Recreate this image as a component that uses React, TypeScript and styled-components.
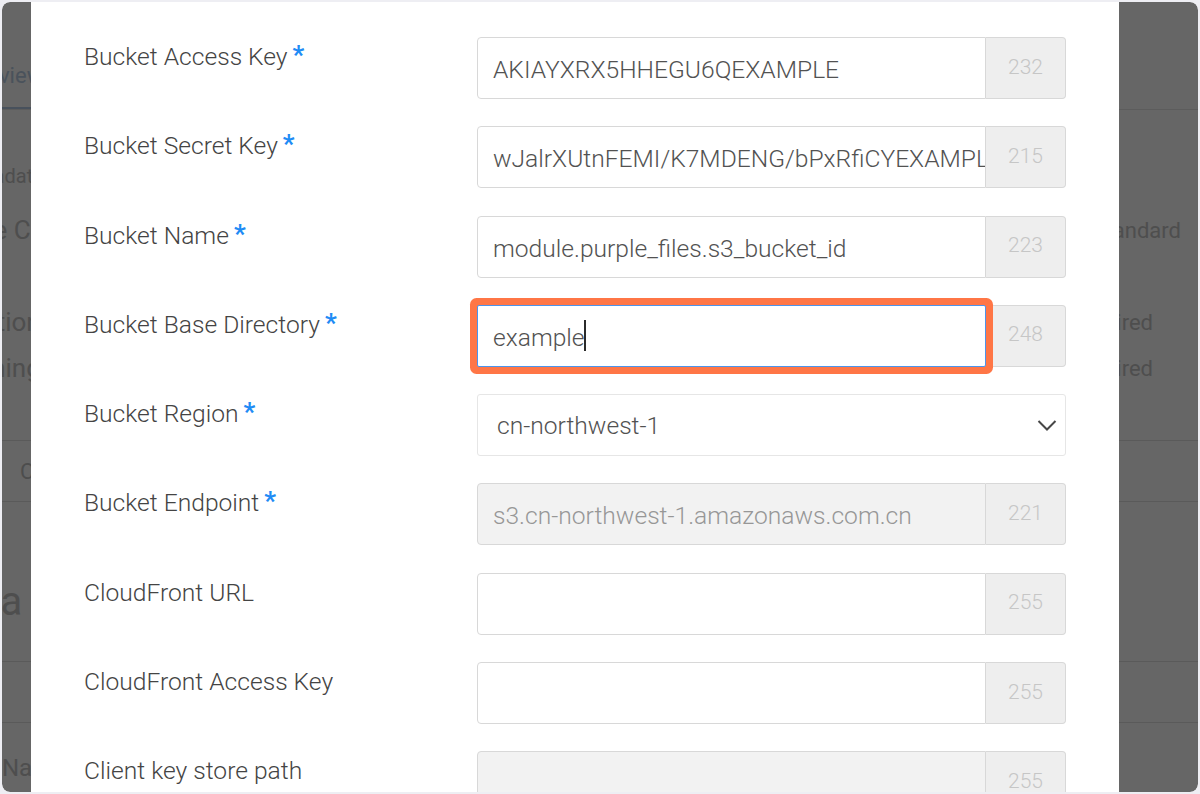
import React from "react";
import styled, { createGlobalStyle } from "styled-components";

interface Field {
  label: string;
  required?: boolean;
  value?: string;
  count?: number;
  focused?: boolean;
  disabled?: boolean;
  select?: boolean;
}

const fields: Field[] = [
  { label: "Bucket Access Key", required: true, value: "AKIAYXRX5HHEGU6QEXAMPLE", count: 232 },
  { label: "Bucket Secret Key", required: true, value: "wJalrXUtnFEMI/K7MDENG/bPxRfiCYEXAMPLEKEY", count: 215 },
  { label: "Bucket Name", required: true, value: "module.purple_files.s3_bucket_id", count: 223 },
  { label: "Bucket Base Directory", required: true, value: "example", count: 248, focused: true },
  { label: "Bucket Region", required: true, value: "cn-northwest-1", select: true },
  { label: "Bucket Endpoint", required: true, value: "s3.cn-northwest-1.amazonaws.com.cn", count: 221, disabled: true },
  { label: "CloudFront URL", value: "", count: 255 },
  { label: "CloudFront Access Key", value: "", count: 255 },
  { label: "Client key store path", value: "", count: 255, disabled: true },
];

export default function App() {
  return (
    <>
      <GlobalStyle />
      <Frame>
        <Stage>
          <Page>
            <TabBar>
              <Tab>Overview</Tab>
            </TabBar>
            <Section>
              <Heading>Metadata</Heading>
              <KeyValue $gap={14}>
                <Key>Storage Class</Key>
                <Val $right={73}>Standard</Val>
              </KeyValue>
              <KeyValue $gap={52}>
                <Key>Encryption</Key>
                <Val $right={101}>Required</Val>
              </KeyValue>
              <KeyValue>
                <Key>Versioning</Key>
                <Val $right={101}>Required</Val>
              </KeyValue>
            </Section>
            <Table>
              <HeadRow>Configuration</HeadRow>
              <BigRow>Create a bucket</BigRow>
              <TableRow />
              <NameRow>Name</NameRow>
            </Table>
          </Page>
          <Backdrop />
          <Modal>
            {fields.map((f) => (
              <Row key={f.label}>
                <Label>
                  {f.label}
                  {f.required && <Star>*</Star>}
                </Label>
                {f.select ? (
                  <Select>
                    <span>{f.value}</span>
                    <svg width="20" height="12" viewBox="0 0 20 12">
                      <polyline
                        points="1.5,2 10,10.5 18.5,2"
                        fill="none"
                        stroke="#474747"
                        strokeWidth="2"
                      />
                    </svg>
                  </Select>
                ) : (
                  <Group>
                    <Input $focused={f.focused} $disabled={f.disabled}>
                      {f.value}
                      {f.focused && <Caret />}
                    </Input>
                    <Count>{f.count}</Count>
                  </Group>
                )}
              </Row>
            ))}
          </Modal>
        </Stage>
      </Frame>
    </>
  );
}

const GlobalStyle = createGlobalStyle`
  html, body {
    margin: 0;
    padding: 0;
    background: #eeeef3;
    font-family: Roboto, "Liberation Sans", Arial, sans-serif;
  }
  * { box-sizing: border-box; }
`;

const Frame = styled.div`
  width: 1200px;
  height: 794px;
  border: 2px solid #eeeef3;
  border-radius: 10px;
  overflow: hidden;
`;

const Stage = styled.div`
  position: relative;
  width: 100%;
  height: 100%;
  overflow: hidden;
  border-radius: 8px;
  background: #ffffff;
`;

const Page = styled.div`
  margin-left: -48px;
  width: 1300px;
  color: #c4c4c4;
`;

const TabBar = styled.div`
  height: 108px;
  display: flex;
  align-items: flex-end;
  border-bottom: 1px solid #e6e6e6;
`;

const Tab = styled.div`
  font-size: 22px;
  color: #b8cde4;
  padding-bottom: 19px;
  border-bottom: 2px solid #b3cbe6;
  width: 200px;
`;

const Section = styled.div`
  padding-top: 46px;
`;

const Heading = styled.div`
  margin-left: 5px;
  height: 40px;
  font-size: 20px;
  display: flex;
  align-items: center;
`;

const KeyValue = styled.div<{ $gap?: number }>`
  margin-top: ${(p) => p.$gap ?? 6}px;
  height: 40px;
  display: flex;
  align-items: center;
  justify-content: space-between;
`;

const Key = styled.div`
  font-size: 26px;
  margin-left: -36px;
`;

const Val = styled.div<{ $right: number }>`
  font-size: 22px;
  margin-right: ${(p) => p.$right}px;
`;

const Table = styled.div`
  margin-top: 52px;
  border-top: 1px solid #e2e2e2;
`;

const TableRow = styled.div`
  height: 61px;
  border-bottom: 1px solid #e2e2e2;
`;

const HeadRow = styled(TableRow)`
  display: flex;
  align-items: center;
  font-size: 22px;
  padding-left: 66px;
  color: #c0c0c0;
`;

const BigRow = styled.div`
  height: 160px;
  display: flex;
  align-items: center;
  padding-top: 40px;
  font-size: 40px;
  margin-left: -80px;
  border-bottom: 1px solid #e2e2e2;
`;

const NameRow = styled.div`
  height: 90px;
  display: flex;
  align-items: center;
  padding-left: 48px;
  font-size: 24px;
`;

const Backdrop = styled.div`
  position: absolute;
  inset: 0;
  background: rgba(0, 0, 0, 0.6);
`;

const Modal = styled.div`
  position: absolute;
  top: 0;
  bottom: 0;
  left: 29px;
  width: 1088px;
  background: #ffffff;
  padding: 35px 53px 0;
  overflow: hidden;
`;

const Row = styled.div`
  display: grid;
  grid-template-columns: 393px 589px;
  margin-bottom: 27.3px;
`;

const Label = styled.div`
  padding-top: 3px;
  font-size: 24.6px;
  line-height: 34px;
  font-weight: 300;
  color: #444444;
`;

const Star = styled.span`
  margin-left: 5px;
  color: #1f8cf5;
  font-weight: 700;
  font-size: 26px;
  line-height: 0;
  vertical-align: 1px;
`;

const Group = styled.div`
  display: flex;
  height: 62px;
`;

const Input = styled.div<{ $focused?: boolean; $disabled?: boolean }>`
  position: relative;
  flex: 1;
  min-width: 0;
  display: flex;
  align-items: center;
  padding: 3px 0 0 15px;
  white-space: nowrap;
  font-size: 24.6px;
  font-weight: 300;
  color: ${(p) => (p.$disabled ? "#979797" : "#525252")};
  background: ${(p) => (p.$disabled ? "#f2f2f2" : "#ffffff")};
  border: 1px solid ${(p) => (p.$focused ? "#4b94ec" : "#d8d8d8")};
  border-radius: ${(p) => (p.$focused ? "2px" : "4px 0 0 4px")};
  z-index: ${(p) => (p.$focused ? 1 : 0)};
  overflow: ${(p) => (p.$focused ? "visible" : "hidden")};
  box-shadow: ${(p) => (p.$focused ? "0 0 0 7px #ff7646" : "none")};
`;

const Caret = styled.span`
  display: inline-block;
  width: 2px;
  height: 31px;
  margin: -3px 0 0 -1px;
  background: #2b2b2b;
`;

const Count = styled.div`
  width: 80px;
  flex: none;
  display: flex;
  align-items: center;
  justify-content: center;
  padding-bottom: 3px;
  font-size: 21px;
  font-weight: 300;
  color: #c6c6c6;
  background: #eeeeee;
  border: 1px solid #d8d8d8;
  border-left: none;
  border-radius: 0 4px 4px 0;
`;

const Select = styled.div`
  height: 62px;
  display: flex;
  align-items: center;
  justify-content: space-between;
  padding: 0 8px 0 19px;
  border: 1px solid #e6e6e6;
  border-radius: 3px;
  background: #ffffff;
  font-size: 24.6px;
  font-weight: 300;
  color: #525252;
`;
